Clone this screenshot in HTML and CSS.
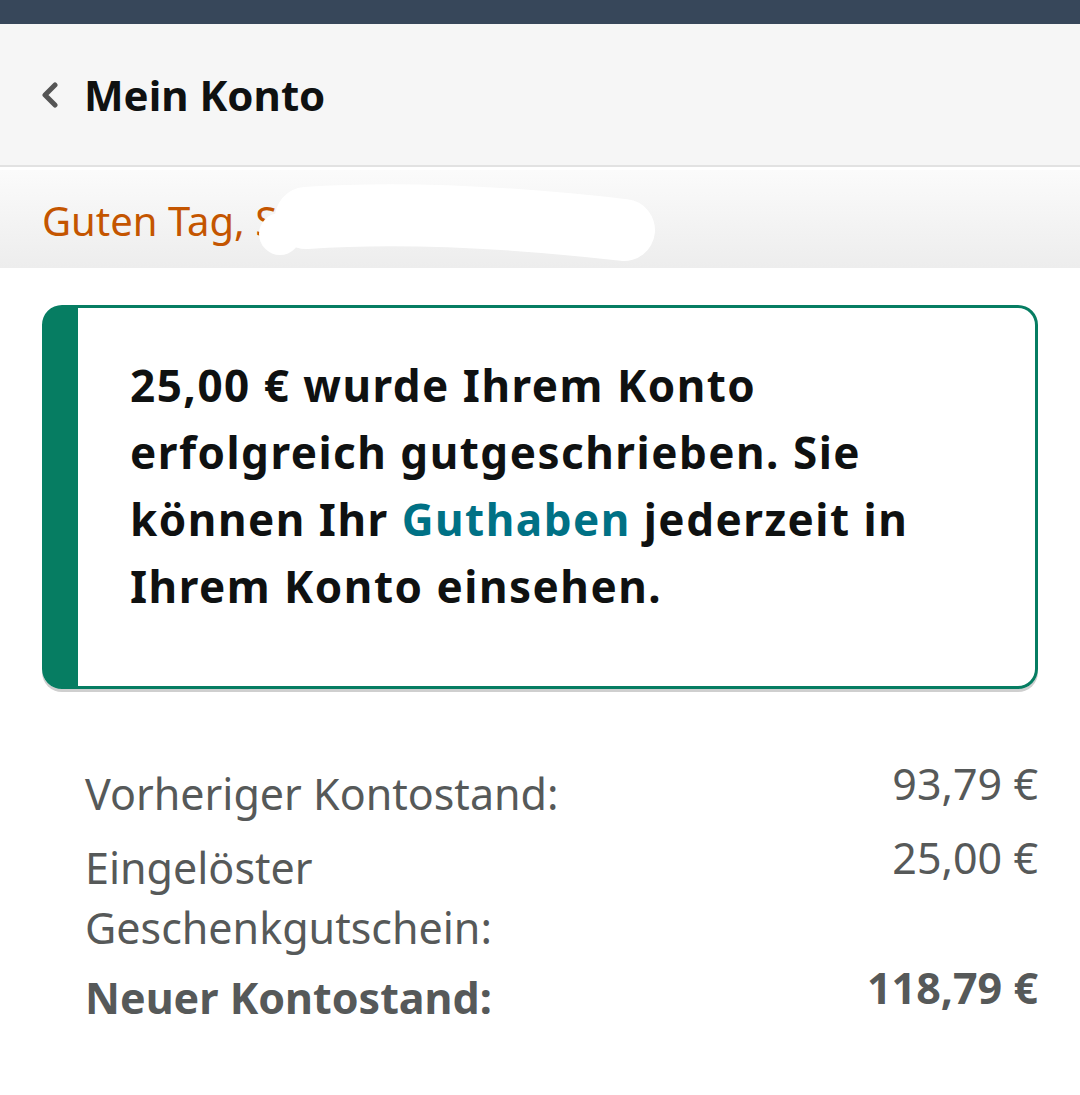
FILE: index.html
```html
<!DOCTYPE html>
<html lang="de">
<head>
  <meta charset="UTF-8">
  <meta name="viewport" content="width=device-width, initial-scale=1.0">
  <title>Mein Konto</title>
  <link rel="stylesheet" href="styles.css">
</head>
<body>
  <div class="status-bar"></div>
  <header class="page-header">
    <svg class="back-icon" width="20" height="26" viewBox="0 0 20 26">
      <path d="M15 3 L5 13 L15 23" fill="none" stroke="#555" stroke-width="5" stroke-linecap="round" stroke-linejoin="round"/>
    </svg>
    <h1>Mein Konto</h1>
  </header>
  <div class="greeting">
    <span>Guten Tag, S</span>
    <svg class="redact" width="440" height="100" viewBox="0 0 440 100">
      <circle cx="40" cy="62" r="21" fill="#fff"/>
      <path d="M66 46 C 150 40, 260 44, 384 58" fill="none" stroke="#fff" stroke-width="62" stroke-linecap="round"/>
    </svg>
  </div>

  <main class="content">
    <div class="alert">
      <p>25,00 € wurde Ihrem Konto erfolgreich gutgeschrieben. Sie können Ihr <a href="#">Guthaben</a> jederzeit in Ihrem Konto einsehen.</p>
    </div>

    <div class="summary">
      <div class="row">
        <span class="label">Vorheriger Kontostand:</span>
        <span class="value">93,79 €</span>
      </div>
      <div class="row">
        <span class="label">Eingelöster<br>Geschenkgutschein:</span>
        <span class="value">25,00 €</span>
      </div>
      <div class="row total">
        <span class="label">Neuer Kontostand:</span>
        <span class="value">118,79 €</span>
      </div>
    </div>
  </main>
</body>
</html>
```

FILE: styles.css
```css
body { margin: 0; background: #fff; font-family: "Noto Sans", "Open Sans", sans-serif; color: #111; }

.status-bar { height: 24px; background: #37475a; }

.page-header { height: 141px; background: #f6f6f6; border-bottom: 2px solid #e2e2e2; display: flex; align-items: center; padding-left: 40px; gap: 24px; }
.page-header h1 { margin: 0; font-size: 42px; font-weight: 700; color: #0f1111; }
.back-icon { display: block; }

.greeting { position: relative; height: 98px; margin-top: 3px; background: linear-gradient(#fbfbfb, #ededed); display: flex; align-items: center; padding-left: 42px; font-size: 40px; color: #c45500; }
.greeting span { margin-top: 2px; }
.redact { position: absolute; left: 240px; top: 2px; }

.content { padding: 37px 42px 0; }

.alert { border: 3px solid #067d62; border-left: 36px solid #067d62; border-radius: 20px; padding: 44px 105px 66px 52px; box-shadow: 0 3px 0 #cfcfcf; }
.alert p { margin: 0; font-size: 44px; letter-spacing: 1.5px; font-weight: 700; line-height: 67px; color: #0f1111; }
.alert a { color: #007185; text-decoration: none; }

.summary { padding: 75px 0 0 43px; display: flex; flex-direction: column; gap: 14px; color: #565959; font-size: 43px; }
.row { display: flex; justify-content: space-between; align-items: flex-start; line-height: 60px; }
.row .value { margin-top: -10px; }
.row.total { font-weight: 700; margin-top: -4px; }
```
